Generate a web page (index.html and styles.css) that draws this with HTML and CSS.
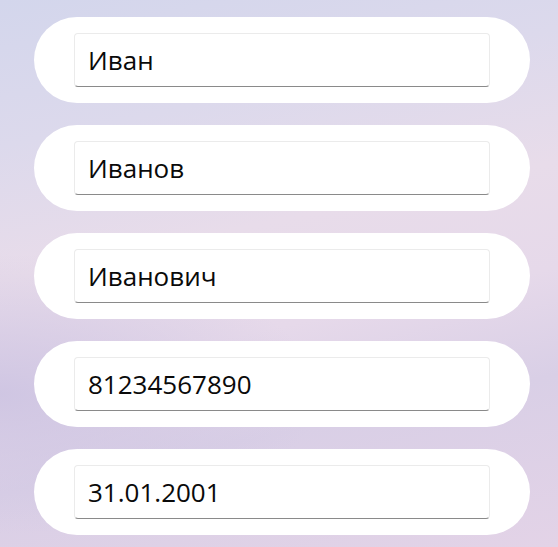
FILE: index.html
```html
<!DOCTYPE html>
<html lang="ru">
<head>
<meta charset="utf-8">
<link rel="stylesheet" href="styles.css">
</head>
<body>
<main class="form">
  <div class="card"><div class="field">Иван</div></div>
  <div class="card"><div class="field">Иванов</div></div>
  <div class="card"><div class="field">Иванович</div></div>
  <div class="card"><div class="field">81234567890</div></div>
  <div class="card"><div class="field">31.01.2001</div></div>
</main>
</body>
</html>
```

FILE: styles.css
```css
html, body {
  margin: 0;
  height: 100%;
}
body {
  width: 558px;
  height: 547px;
  overflow: hidden;
  background:
    radial-gradient(ellipse 320px 140px at 0% 72%, rgba(205,196,226,0.9), rgba(205,196,226,0) 100%),
    linear-gradient(168deg, #d3d6ec 0%, #dcd9ec 22%, #e8dcea 42%, #e6d9ea 58%, #d9cfe6 74%, #e3d3e7 100%);
  font-family: "Open Sans", "Noto Sans", "DejaVu Sans", sans-serif;
}
.form {
  display: flex;
  flex-direction: column;
  gap: 22px;
  padding: 17px 28px 0 34px;
}
.card {
  width: 496px;
  box-sizing: border-box;
  background: #fff;
  border-radius: 43px;
  padding: 16px 40px;
}
.field {
  height: 54px;
  box-sizing: border-box;
  border: 1px solid #ebebeb;
  border-bottom: 1px solid #8a8a8a;
  border-radius: 4px;
  padding: 0 13px;
  display: flex;
  align-items: center;
  font-size: 26px;
  color: #0a0a0a;
}
```
